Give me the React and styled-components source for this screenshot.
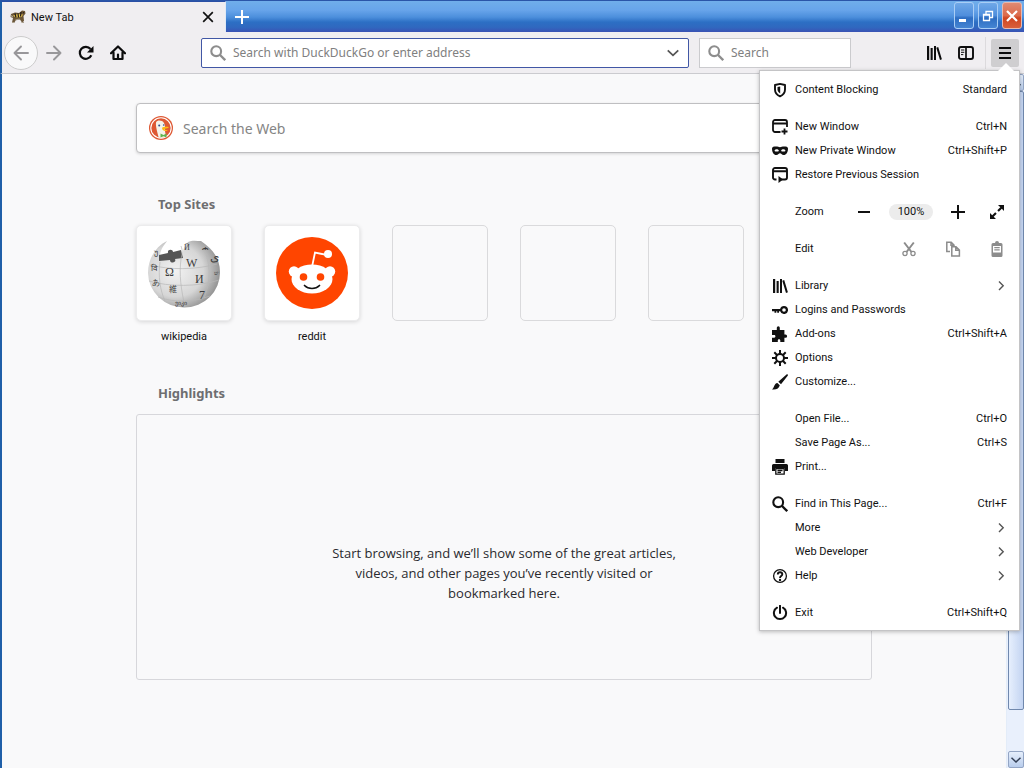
import styled, { createGlobalStyle } from 'styled-components'

const GlobalStyle = createGlobalStyle`
    *, *::before, *::after {
        box-sizing: border-box;
    }

    body {
        margin: 0;
        font-family: Roboto, 'Noto Sans', sans-serif;
        font-size: 11px;
        color: #111;
    }

    button, input {
        font: inherit;
        color: inherit;
        padding: 0;
        border: 0;
        background: none;
    }

    h2, p {
        margin: 0;
    }
`

/* ---------- icons ---------- */

const glyphs = {
    shield: (
        <>
            <path d="M8 1.9 13 3v4.4c0 3-1.700 5.400-5 6.900-3.300-1.500-5-3.900-5-6.900V3z" fill="none" stroke="currentColor" strokeWidth="1.900" strokeLinejoin="round" />
            <path d="M8.200 4.500v7C6.200 10.300 5.500 9 5.500 7.200V5z" />
        </>
    ),
    newWindow: (
        <path d="M8.500 13H3a2 2 0 0 1-2-2V3a2 2 0 0 1 2-2h10a2 2 0 0 1 2 2v5M1 4.500h14M12.500 9.500v6M9.500 12.500h6" fill="none" stroke="currentColor" strokeWidth="1.800" />
    ),
    mask: (
        <path fillRule="evenodd" d="M0 5.500C0 3.800 2 3.500 4 3.500c1.800 0 2.700.7 4 .7s2.200-.7 4-.7c2 0 4 .3 4 2C16 9.500 14.200 12 11.700 12 9.600 12 9.200 10.300 8 10.300S6.400 12 4.300 12C1.800 12 0 9.500 0 5.500zm2.500 2.200c.8 1.200 3.600 1.200 4.400 0C6 5.900 3.500 5.900 2.500 7.700zm6.600 0c.8 1.200 3.600 1.200 4.400 0-1-1.800-3.500-1.800-4.400 0z" />
    ),
    restore: (
        <>
            <path d="M4.500 12.500H3a2 2 0 0 1-2-2V3a2 2 0 0 1 2-2h10a2 2 0 0 1 2 2v7.500a2 2 0 0 1-2 2H8M1 4.300h14" fill="none" stroke="currentColor" strokeWidth="1.900" />
            <path d="M6.500 9 11 12.500 6.500 16z" />
        </>
    ),
    minus: <path d="M2 7h12v2H2z" />,
    plus: <path d="M7 1h2v6h6v2H9v6H7V9H1V7h6z" />,
    expand: (
        <path d="M9 1h6v6l-2.200-2.200-3 3L8.300 6.300l3-3zM7 15H1V9l2.200 2.200 3-3 1.500 1.500-3 3z" />
    ),
    cut: (
        <>
            <path d="M3.200 1.500 10.500 11M12.800 1.500 5.500 11" fill="none" stroke="currentColor" strokeWidth="2" />
            <circle cx="4" cy="12.500" r="2.100" fill="none" stroke="currentColor" strokeWidth="1.300" />
            <circle cx="12" cy="12.500" r="2.100" fill="none" stroke="currentColor" strokeWidth="1.300" />
        </>
    ),
    copy: (
        <>
            <path d="M5 10.500H1.800V1.200h4.400L9 4v1M6 1v3.300h3" fill="none" stroke="currentColor" strokeWidth="1.500" />
            <path d="M6.800 5.800h4.200l3.400 3.300v5.900H6.800zM10.800 6v3.300h3.500" fill="none" stroke="currentColor" strokeWidth="1.500" />
        </>
    ),
    paste: (
        <>
            <path fillRule="evenodd" d="M4 2h2a2 2 0 0 1 4 0h2a1.500 1.500 0 0 1 1.500 1.500v11A1.500 1.500 0 0 1 12 16H4a1.500 1.500 0 0 1-1.500-1.500v-11A1.500 1.500 0 0 1 4 2zm0 3v6.500h8V5z" />
            <path d="M5.300 6h5.400v1.200H5.300zM5.300 8.200h5.400v1.200H5.300z" />
        </>
    ),
    library: (
        <path d="M1 1h2.200v14H1zM4.600 3h2.100v12H4.600zM8 1h2v14H8zM10.300 2.700l1.900-.7 3.700 12.200-1.900.7z" />
    ),
    key: (
        <path fillRule="evenodd" d="M12 4a4 4 0 1 1-3.800 5.200H7v1.600H5.200V9.200h-.9v1.600H2.500V9.200H0V7h8.100A4 4 0 0 1 12 4zm0 2.200a1.800 1.800 0 1 0 0 3.600 1.800 1.800 0 0 0 0-3.600z" />
    ),
    puzzle: (
        <path d="M0 4h4.800V1.800a1.500 1.500 0 1 1 3 0V4h4.600v4.600h1.100a1.600 1.600 0 1 1 0 3.200h-1.100V16H8.300v-1.700c0-1.500-2.500-1.500-2.500 0V16H0v-4.300h2.300c1.500 0 1.500-2.700 0-2.700H0z" />
    ),
    gear: (
        <>
            <circle cx="8" cy="8" r="4" fill="none" stroke="currentColor" strokeWidth="2" />
            <path d="M8 0v4M8 12v4M0 8h4M12 8h4M2.300 2.300l2.900 2.900M10.800 10.800l2.900 2.900M13.700 2.300l-2.900 2.900M5.200 10.800l-2.900 2.900" stroke="currentColor" strokeWidth="2" />
        </>
    ),
    brush: (
        <path d="M14.500.5c1-.8 2 .2 1.200 1.200L9 10.200 6.300 7.700zM5.400 9l2.400 2.300C7 14.500 4.500 16 0 15.500 2.300 14 1.800 9.500 5.400 9z" />
    ),
    print: (
        <>
            <path d="M3.500 0h9v4h-9zM1.500 5h13A1.500 1.500 0 0 1 16 6.500V12h-3V9H3v3H0V6.500A1.500 1.500 0 0 1 1.500 5z" />
            <path d="M3.800 9.500h8.400v5.700H3.800zM5.500 11.500h5M5.500 13.400h3.500" fill="none" stroke="currentColor" strokeWidth="1.300" />
        </>
    ),
    search: (
        <>
            <circle cx="6.200" cy="6.200" r="4.900" fill="none" stroke="currentColor" strokeWidth="2.100" />
            <path d="m9.800 9.800 5.400 5.400" stroke="currentColor" strokeWidth="2.300" />
        </>
    ),
    help: (
        <>
            <circle cx="8" cy="8" r="6.400" fill="none" stroke="currentColor" strokeWidth="1.300" />
            <path d="M5.800 6.500c0-3 4.500-2.800 4.500-.2C10.300 8 8 8 8 9.900" fill="none" stroke="currentColor" strokeWidth="1.900" />
            <circle cx="8" cy="11.900" r="1.200" />
        </>
    ),
    power: (
        <path d="M5 2.700a6.100 6.100 0 1 0 6 0M8 .8V8" fill="none" stroke="currentColor" strokeWidth="2" strokeLinecap="round" />
    ),
    chevronRight: <path d="m8 3.500 4.200 4.200L8 12" fill="none" stroke="currentColor" strokeWidth="1.400" />,
    chevronDown: <path d="m2 5 6 5.700L14 5" fill="none" stroke="currentColor" strokeWidth="2" />,
    back: <path d="M15 8H1.500M8 1.500 1.500 8 8 14.500" fill="none" stroke="currentColor" strokeWidth="1.900" strokeLinecap="round" strokeLinejoin="round" />,
    forward: <path d="M1 8h13.500M8 1.500 14.500 8 8 14.500" fill="none" stroke="currentColor" strokeWidth="1.900" strokeLinecap="round" strokeLinejoin="round" />,
    reload: (
        <>
            <path d="M13.300 10.300A6 6 0 1 1 12.500 4" fill="none" stroke="currentColor" strokeWidth="2.200" />
            <path d="M15.500 1v6.500H9z" />
        </>
    ),
    home: (
        <path d="M1 8.300 8 1.500l7 6.800M3.500 7.500V14h9V7.500M8 14V9.500" fill="none" stroke="currentColor" strokeWidth="2.200" strokeLinejoin="round" strokeLinecap="round" />
    ),
    sidebar: (
        <>
            <rect x="1" y="2" width="14" height="12" rx="2" fill="none" stroke="currentColor" strokeWidth="1.900" />
            <path d="M8 2v12" stroke="currentColor" strokeWidth="1.700" />
            <path d="M3 5h3.300M3 7.300h3.300M3 9.600h2.300" stroke="currentColor" strokeWidth="1" />
        </>
    ),
    menu: <path d="M2 2h12v2H2zM2 7h12v2H2zM2 12h12v2H2z" />,
    close: <path d="m2.500 2.500 11 11M13.500 2.500l-11 11" stroke="currentColor" strokeWidth="1.900" />,
}

function Icon({ name, size = 16 }) {
    return (
        <Svg viewBox="0 0 16 16" width={size} height={size} aria-hidden="true">
            {glyphs[name]}
        </Svg>
    )
}

function TabFavicon() {
    return (
        <Svg viewBox="0 0 16 16" width="16" height="16" aria-hidden="true">
            <path d="M1 5 5 3.500 9 4l3-2.500 3 .5.500 2.500-2 2.500.5 5-2 1.500-2-3-4 .5L4 14l-2-.5L3 9 .5 8z" fill="#6b5638" />
            <path d="M3 6.500 8 5l5 .500-1.500 2.500-6 .5z" fill="#e5c14d" />
            <path d="m5 4.500 1 4M8 4.500l.5 4M11 3l-.5 4.500M13 3.500l1 .5" stroke="#211b18" strokeWidth="1.200" />
            <path d="M1 6.500 3 8M5.500 11l4-1M2 13.500h2.500M11.500 13.500H14" stroke="#aaa08e" strokeWidth="1.200" />
        </Svg>
    )
}

function DuckLogo() {
    return (
        <Svg viewBox="0 0 24 24" width="24" height="24" aria-hidden="true">
            <circle cx="12" cy="12" r="12" fill="#de5833" />
            <circle cx="12" cy="12" r="10.200" fill="none" stroke="#fff" strokeWidth="1.100" />
            <path d="M7 6.500c1-2.500 6-2.700 8 .5 1.500 2.500 1 6 1 8l1 5.800c-2.500 1.300-5 1.400-7.300.6C8.500 17 6.500 10.500 7 6.500z" fill="#f4f2e9" />
            <path d="M13 11.800c2-1.500 5-1.200 7-.8-1 1.500-4.500 1.500-4.500 2.300s2 .8 3.700.5c-1.500 2-6.200 1.700-6.200-2z" fill="#fdb913" />
            <path d="m11.500 17.500 3 1.500 3-1.500v4l-3-1.200-3 1.200z" fill="#5fb44c" />
            <circle cx="10.200" cy="9.500" r="1" fill="#2d4f8e" />
            <circle cx="14.700" cy="9" r=".8" fill="#2d4f8e" />
        </Svg>
    )
}

function WikipediaLogo() {
    return (
        <Svg viewBox="0 0 72 72" width="72" height="72" aria-hidden="true">
            <defs>
                <radialGradient id="globe" cx=".38" cy=".45" r=".65">
                    <stop offset="0" stopColor="#f2f2f2" />
                    <stop offset=".6" stopColor="#d6d6d6" />
                    <stop offset="1" stopColor="#8c8c8c" />
                </radialGradient>
            </defs>
            <path d="M19 4c-2 3-6 7-7 14l9 2 13-3 2-6 4-6c4-2 9-1 13-1 12 8 19 18 19 31a36 35 0 0 1-72 1C0 22 7 10 19 4z" fill="url(#globe)" />
            <path d="m11 18 9-2c-1-4 5-4 5-1l8-2 2 8-8 1c2 4-5 5-5 1l-11 1z" fill="#555" />
            <path d="M12 25c-2 14 0 28 5 39M33 22c-2 16 0 30 4 48M55 10c8 16 8 34 1 51M2 28c20 5 45 5 67-1M1 44c20 6 49 6 70-1M10 60c16 6 36 5 52-1M33 9c2 5 1 9 0 13" fill="none" stroke="#b8b8b8" strokeWidth=".7" />
            <g fill="#3c3c3c" fontFamily="Liberation Serif, serif" fontSize="12">
                <text x="17" y="39">Ω</text>
                <text x="38" y="30">W</text>
                <text x="47" y="46">И</text>
                <text x="51" y="62">7</text>
                <text x="62" y="24">ی</text>
                <text x="3" y="34" fontSize="8">वि</text>
                <text x="4" y="48" fontSize="8">あ</text>
                <text x="36" y="13" fontSize="8">Й</text>
                <text x="54" y="14" fontSize="8">ሐ</text>
                <text x="21" y="55" fontSize="8" fontFamily="Noto Sans CJK JP, sans-serif">維</text>
                <text x="27" y="68" fontSize="6">ვიკი</text>
                <text x="6" y="18" fontSize="8">უ</text>
                <text x="66" y="38" fontSize="6">ש</text>
            </g>
        </Svg>
    )
}

function RedditLogo() {
    return (
        <Svg viewBox="0 0 72 72" width="72" height="72" aria-hidden="true">
            <circle cx="36" cy="36" r="36" fill="#ff4500" />
            <path d="m36 30 3-14.500 12 2.500" fill="none" stroke="#fff" strokeWidth="1.800" />
            <circle cx="52" cy="17" r="4" fill="#fff" />
            <circle cx="18" cy="34.500" r="5.200" fill="#fff" />
            <circle cx="54" cy="34.500" r="5.200" fill="#fff" />
            <ellipse cx="36" cy="42" rx="20.500" ry="14.500" fill="#fff" />
            <circle cx="27.500" cy="40" r="3.800" fill="#ff4500" />
            <circle cx="44.500" cy="40" r="3.800" fill="#ff4500" />
            <path d="M28.500 48.500c4 4 11 4 15 0" fill="none" stroke="#111" strokeWidth="1.700" strokeLinecap="round" />
        </Svg>
    )
}

/* ---------- data ---------- */

const sites = [
    { name: 'wikipedia', logo: <WikipediaLogo /> },
    { name: 'reddit', logo: <RedditLogo /> },
    {}, {}, {}, {},
]

const topGroups = [
    [{ icon: 'shield', label: 'Content Blocking', hint: 'Standard' }],
    [
        { icon: 'newWindow', label: 'New Window', hint: 'Ctrl+N' },
        { icon: 'mask', label: 'New Private Window', hint: 'Ctrl+Shift+P' },
        { icon: 'restore', label: 'Restore Previous Session' },
    ],
]

const bottomGroups = [
    [
        { icon: 'library', label: 'Library', more: true },
        { icon: 'key', label: 'Logins and Passwords' },
        { icon: 'puzzle', label: 'Add-ons', hint: 'Ctrl+Shift+A' },
        { icon: 'gear', label: 'Options' },
        { icon: 'brush', label: 'Customize...' },
    ],
    [
        { label: 'Open File...', hint: 'Ctrl+O' },
        { label: 'Save Page As...', hint: 'Ctrl+S' },
        { icon: 'print', label: 'Print...' },
    ],
    [
        { icon: 'search', label: 'Find in This Page...', hint: 'Ctrl+F' },
        { label: 'More', more: true },
        { label: 'Web Developer', more: true },
        { icon: 'help', label: 'Help', more: true },
    ],
    [{ icon: 'power', label: 'Exit', hint: 'Ctrl+Shift+Q' }],
]

/* ---------- components ---------- */

function MenuGroups({ groups }) {
    return groups.map((items) => (
        <MenuGroup key={items[0].label}>
            {items.map(({ icon, label, hint, more }) => (
                <MenuItem key={label}>
                    <IconSlot>{icon && <Icon name={icon} />}</IconSlot>
                    <MenuLabel>{label}</MenuLabel>
                    {hint && <span>{hint}</span>}
                    {more && <MoreArrow><Icon name="chevronRight" /></MoreArrow>}
                </MenuItem>
            ))}
        </MenuGroup>
    ))
}

function AppMenu() {
    return (
        <MenuPanel>
            <MenuGroups groups={topGroups} />
            <MenuGroup>
                <MenuRow>
                    <IconSlot />
                    <MenuLabel>Zoom</MenuLabel>
                    <ZoomControls>
                        <SmallBtn aria-label="Zoom out"><Icon name="minus" /></SmallBtn>
                        <ZoomLevel>100%</ZoomLevel>
                        <SmallBtn aria-label="Zoom in"><Icon name="plus" /></SmallBtn>
                        <FullScreenBtn aria-label="Full screen"><Icon name="expand" /></FullScreenBtn>
                    </ZoomControls>
                </MenuRow>
            </MenuGroup>
            <MenuGroup>
                <MenuRow>
                    <IconSlot />
                    <MenuLabel>Edit</MenuLabel>
                    <EditControls>
                        <SmallBtn aria-label="Cut" disabled><Icon name="cut" /></SmallBtn>
                        <SmallBtn aria-label="Copy" disabled><Icon name="copy" /></SmallBtn>
                        <SmallBtn aria-label="Paste" disabled><Icon name="paste" /></SmallBtn>
                    </EditControls>
                </MenuRow>
            </MenuGroup>
            <MenuGroups groups={bottomGroups} />
        </MenuPanel>
    )
}

function TitleBar() {
    return (
        <TitleBarWrap>
            <Tab>
                <TabFavicon />
                <TabTitle>New Tab</TabTitle>
                <TabClose aria-label="Close tab"><Icon name="close" size={14} /></TabClose>
            </Tab>
            <NewTabBtn aria-label="Open a new tab"><Icon name="plus" /></NewTabBtn>
            <WindowBtns>
                <WindowBtn aria-label="Minimize">
                    <Svg viewBox="0 0 18 24" width="18" height="24"><path d="M4 15h7v3H4z" fill="#fff" /></Svg>
                </WindowBtn>
                <WindowBtn aria-label="Restore">
                    <Svg viewBox="0 0 18 24" width="18" height="24">
                        <path d="M7 10V7.500h6.500v6H11M4.500 10.500h6v6h-6zM4 11h7M7 7.500h7" fill="none" stroke="#fff" strokeWidth="1.300" />
                    </Svg>
                </WindowBtn>
                <CloseWindowBtn aria-label="Close">
                    <Svg viewBox="0 0 18 24" width="18" height="24">
                        <path d="m4 7 10 10M14 7 4 17" stroke="#fff" strokeWidth="2.200" />
                    </Svg>
                </CloseWindowBtn>
            </WindowBtns>
        </TitleBarWrap>
    )
}

function NavBar() {
    return (
        <NavBarWrap>
            <BackBtn aria-label="Back"><Icon name="back" /></BackBtn>
            <ToolBtn aria-label="Forward" $faded><Icon name="forward" /></ToolBtn>
            <ToolBtn aria-label="Reload"><Icon name="reload" /></ToolBtn>
            <ToolBtn aria-label="Home"><Icon name="home" /></ToolBtn>
            <Spring />
            <UrlField>
                <Icon name="search" />
                <FieldInput aria-label="Address" placeholder="Search with DuckDuckGo or enter address" />
                <HistoryBtn aria-label="Show history"><Icon name="chevronDown" size={14} /></HistoryBtn>
            </UrlField>
            <SearchField>
                <Icon name="search" />
                <FieldInput aria-label="Search" placeholder="Search" />
            </SearchField>
            <Spring />
            <ToolBtn aria-label="Library"><Icon name="library" /></ToolBtn>
            <ToolBtn aria-label="Sidebars"><Icon name="sidebar" /></ToolBtn>
            <Divider />
            <MenuAnchor>
                <MenuBtn aria-label="Open menu" aria-expanded="true"><Icon name="menu" /></MenuBtn>
                <AppMenu />
            </MenuAnchor>
        </NavBarWrap>
    )
}

function NewTabPage() {
    return (
        <Page>
            <WebSearch>
                <DuckLogo />
                <WebSearchInput aria-label="Search the Web" placeholder="Search the Web" />
            </WebSearch>

            <SectionTitle>Top Sites</SectionTitle>
            <Sites>
                {sites.map(({ name, logo }, i) => (
                    <Site key={i}>
                        {name ? (
                            <SiteLink href="#">
                                <Tile $filled>{logo}</Tile>
                                <SiteName>{name}</SiteName>
                            </SiteLink>
                        ) : (
                            <Tile />
                        )}
                    </Site>
                ))}
            </Sites>

            <SectionTitle>Highlights</SectionTitle>
            <Highlights>
                <HighlightsText>
                    Start browsing, and we’ll show some of the great articles, videos, and other pages you’ve recently visited or bookmarked here.
                </HighlightsText>
            </Highlights>
        </Page>
    )
}

export default function App() {
    return (
        <Window>
            <GlobalStyle />
            <TitleBar />
            <NavBar />
            <Content>
                <NewTabPage />
                <ScrollBar>
                    <ScrollBtn aria-label="Scroll up" $up><Icon name="chevronDown" size={12} /></ScrollBtn>
                    <ScrollThumb />
                    <ScrollTrack />
                    <ScrollBtn aria-label="Scroll down"><Icon name="chevronDown" size={12} /></ScrollBtn>
                </ScrollBar>
            </Content>
        </Window>
    )
}

/* ---------- styles ---------- */

const Svg = styled.svg`
    display: block;
    flex: none;
    fill: currentColor;
`

const Window = styled.div`
    display: flex;
    flex-direction: column;
    min-height: 100vh;
    background: #f9f9fa;
`

const TitleBarWrap = styled.header`
    display: flex;
    height: 32px;
    border-top: 1px solid #2a55a8;
    background: linear-gradient(#70aeea 0%, #67a4ea 30%, #4c8fdc 52%, #2c6fc4 68%, #3068bf 85%, #3a52b4 100%);
`

const Tab = styled.div`
    display: flex;
    align-items: center;
    width: 226px;
    padding: 0 10px 0 8px;
    border-top: 1px solid #2a4fa5;
    border-left: 2px solid #1f5fa8;
    border-right: 1px solid #dfe9f5;
    background: #f0eef1;
`

const TabTitle = styled.span`
    flex: 1;
    margin-left: 5px;
`

const TabClose = styled.button`
    display: grid;
    place-items: center;
    height: 16px;
`

const NewTabBtn = styled.button`
    display: grid;
    place-items: center;
    width: 32px;
    color: #fff;
`

const WindowBtns = styled.div`
    display: flex;
    gap: 4px;
    margin-left: auto;
    padding: 1px 2px 3px 0;
`

const WindowBtn = styled.button`
    display: grid;
    place-items: center;
    width: 20px;
    border: 1px solid #a9cdf5;
    border-radius: 3px;
    background: linear-gradient(#6fa8e8, #4f8edc 50%, #2d6dc2 60%, #4585d3);
`

const CloseWindowBtn = styled(WindowBtn)`
    border-color: #e8b9b0;
    background: linear-gradient(#e08a72, #dc6a4b 50%, #cf4521 60%, #d9603c);
`

const NavBarWrap = styled.nav`
    display: flex;
    align-items: center;
    height: 42px;
    padding: 0 5px 0 2px;
    border-left: 2px solid #1f5fa8;
    border-bottom: 1px solid #cbcbcf;
    background: #f0eef1;
`

const ToolBtn = styled.button`
    display: grid;
    place-items: center;
    width: 32px;
    height: 32px;
    color: ${({ $faded }) => ($faded ? '#98979a' : '#0c0c0d')};
`

const BackBtn = styled(ToolBtn)`
    width: 34px;
    height: 34px;
    border: 1px solid #ccc;
    border-radius: 50%;
    background: #f9f9fa;
    color: #98979a;
`

const Spring = styled.div`
    flex: 67 1 0;
`

const Field = styled.div`
    display: flex;
    align-items: center;
    gap: 7px;
    height: 30px;
    padding: 0 8px;
    background: #fff;
    font-family: 'Noto Sans', sans-serif;
    font-size: 12px;
    color: #8d8d8d;
`

const UrlField = styled(Field)`
    flex: 470 1 0;
    border: 1px solid #4157a5;
    border-radius: 2px;
`

const SearchField = styled(Field)`
    width: 152px;
    margin-left: 10px;
    border: 1px solid #cbcbce;
`

const FieldInput = styled.input`
    flex: 1;
    min-width: 0;
    outline: 0;

    &::placeholder {
        color: #808080;
        opacity: 1;
    }
`

const HistoryBtn = styled.button`
    display: grid;
    place-items: center;
    color: #555;
`

const Divider = styled.div`
    width: 1px;
    height: 32px;
    margin: 0 5px 0 3px;
    background: #dcdadd;
`

const MenuAnchor = styled.div`
    position: relative;
`

const MenuBtn = styled(ToolBtn)`
    width: 28px;
    height: 28px;
    border-radius: 2px;
    background: #cfced0;
`

const MenuPanel = styled.div`
    position: absolute;
    z-index: 1;
    top: 31px;
    right: -1px;
    width: 261px;
    padding: 7px 12px 5px 12px;
    border: 1px solid #c4c4c6;
    background: #fff;
    box-shadow: 0 1px 4px rgba(0, 0, 0, 0.25);

    &::before {
        content: '';
        position: absolute;
        top: -8px;
        right: 5px;
        border: 8px solid transparent;
        border-top: 0;
        border-bottom-color: #fff;
    }
`

const MenuGroup = styled.div`
    & + & {
        margin-top: 13px;
    }
`

const MenuRow = styled.div`
    display: flex;
    align-items: center;
    width: 100%;
    height: 24px;
`

const MenuItem = styled(MenuRow).attrs({ as: 'button' })`
    text-align: left;
`

const IconSlot = styled.span`
    width: 16px;
    margin-right: 7px;
`

const MenuLabel = styled.span`
    flex: 1;
`

const MoreArrow = styled.span`
    color: #555;
`

const ZoomControls = styled.div`
    display: flex;
    align-items: center;
    gap: 15px;
`

const EditControls = styled(ZoomControls)`
    gap: 24px;
`

const SmallBtn = styled.button`
    display: grid;
    place-items: center;
    width: 20px;
    height: 20px;

    &:disabled {
        color: #8c8c8c;
    }
`

const FullScreenBtn = styled(SmallBtn)`
    margin-left: 4px;
`

const ZoomLevel = styled.button`
    width: 44px;
    height: 16px;
    border-radius: 8px;
    background: #ececec;
    line-height: 16px;
`

const Content = styled.div`
    display: flex;
    flex: 1;
    border-left: 2px solid #1f5fa8;
`

const Page = styled.main`
    flex: 1;
    max-width: 736px;
    margin: 0 auto;
    padding-top: 29px;
`

const WebSearch = styled.div`
    display: flex;
    align-items: center;
    gap: 10px;
    height: 50px;
    padding: 0 12px;
    border: 1px solid #bfbfc1;
    border-radius: 4px;
    background: #fff;
    box-shadow: 0 1px 3px rgba(0, 0, 0, 0.15);
`

const WebSearchInput = styled.input`
    flex: 1;
    outline: 0;
    font-family: 'Noto Sans', sans-serif;
    font-size: 14px;

    &::placeholder {
        color: #858585;
        opacity: 1;
    }
`

const SectionTitle = styled.h2`
    margin: 41px 0 11px 22px;
    font-family: 'Noto Sans', sans-serif;
    font-size: 13px;
    line-height: 20px;
    color: #6e6e70;
`

const Sites = styled.ul`
    display: flex;
    justify-content: space-between;
    margin: 0;
    padding: 0;
    list-style: none;
`

const Site = styled.li`
    width: 96px;
    height: 117px;
`

const SiteLink = styled.a`
    color: inherit;
    text-decoration: none;
`

const Tile = styled.div`
    display: grid;
    place-items: center;
    height: 96px;
    border: 1px solid ${({ $filled }) => ($filled ? '#ececed' : '#dadadc')};
    border-radius: 5px;
    background: ${({ $filled }) => ($filled ? '#fff' : 'transparent')};
    box-shadow: ${({ $filled }) => ($filled ? '0 1px 4px rgba(0, 0, 0, 0.14)' : 'none')};
`

const SiteName = styled.div`
    padding-top: 8px;
    line-height: 16px;
    text-align: center;
`

const Highlights = styled.section`
    height: 266px;
    padding-top: 128px;
    border: 1px solid #d7d7db;
    border-radius: 3px;
`

const HighlightsText = styled.p`
    max-width: 352px;
    margin: 0 auto;
    font-family: 'Open Sans', 'Noto Sans', sans-serif;
    font-size: 13px;
    line-height: 20px;
    text-align: center;
    color: #2a2a2e;
`

const ScrollBar = styled.aside`
    display: flex;
    flex-direction: column;
    width: 18px;
    padding-left: 1px;
    border-left: 1px solid #e3ecf8;
    background: #e9f0fc;
`

const ScrollBtn = styled.button`
    display: grid;
    place-items: center;
    height: 17px;
    border: 1px solid #93a5c4;
    border-radius: 2px;
    background: linear-gradient(#e6effc, #b9cdec);
    color: #333f55;

    svg {
        transform: ${({ $up }) => ($up ? 'rotate(180deg)' : 'none')};
    }
`

const ScrollThumb = styled.div`
    flex: 619;
    border: 1px solid #7088ad;
    border-radius: 2px;
    background: linear-gradient(90deg, #e6effd, #c3d4f2);
`

const ScrollTrack = styled.div`
    flex: 41;
`
